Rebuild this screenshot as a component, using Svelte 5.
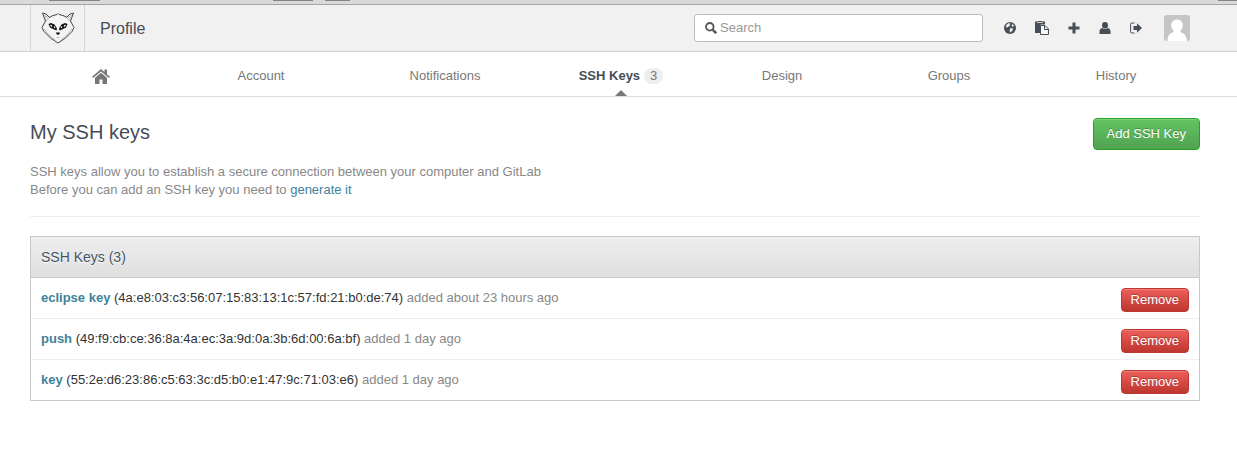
<script>
  const tabs = ['Account', 'Notifications', 'SSH Keys', 'Design', 'Groups', 'History'];
  const keys = [
    { title: 'eclipse key', print: '4a:e8:03:c3:56:07:15:83:13:1c:57:fd:21:b0:de:74', age: 'added about 23 hours ago' },
    { title: 'push', print: '49:f9:cb:ce:36:8a:4a:ec:3a:9d:0a:3b:6d:00:6a:bf', age: 'added 1 day ago' },
    { title: 'key', print: '55:2e:d6:23:86:c5:63:3c:d5:b0:e1:47:9c:71:03:e6', age: 'added 1 day ago' }
  ];
</script>

<div class="strip"><i class="a"></i><i class="b"></i><i class="c"></i><i class="d"></i></div>

<header>
  <a class="logo" href="#home" aria-label="Dashboard">
    <svg width="34" height="32" viewBox="0 0 34 32" fill="none" stroke="#444" stroke-width="1" stroke-linejoin="round">
      <path fill="#f5f5f5" d="M8 5.500 12 3.500 16 2.500 17 1.500 18 2.500 22 3.500 26 5.500 29.500 9 33 15.500 31 19.500 24.500 26 17 31 9.500 26 3 19.500 1 15.500 4.500 9Z" />
      <path fill="#eee" d="M4.500 9 1.500 1 5 2 8.500 5.500M29.500 9 32.500 1 29 2 25.500 5.500" />
      <path stroke="#aaa" stroke-width=".8" d="M4.500 7 3.500 3.500 7 5.500M29.500 7 30.500 3.500 27 5.500M3 17 8 23 14 28M31 17 26 23 20 28" />
      <g fill="#111" stroke="none">
        <path d="M7.500 12 10 11 13.500 12.500 16 16.500 15.500 18.500 12 17 9 15.500Z" />
        <path d="M26.500 12 24 11 20.500 12.500 18 16.500 18.500 18.500 22 17 25 15.500Z" />
        <path d="M15 20.500H19L18.500 22 17 23 15.500 22Z" />
      </g>
      <path stroke="#fff" stroke-width="1.200" d="M9.500 13 11 14.500M13 14.500 14 16M24.500 13 23 14.500M21 14.500 20 16" />
      <path stroke="#bbb" d="M15.500 25.500H18.500" />
    </svg>
  </a>
  <h1>Profile</h1>
  <label class="search">
    <svg width="12" height="12" viewBox="0 0 12 12" fill="none" stroke="#555"><circle cx="4.800" cy="4.800" r="3.800" stroke-width="1.800" /><path stroke-width="2.500" d="M7.800 7.800 11.200 11.200" /></svg>
    <input type="text" placeholder="Search" aria-label="Search" />
  </label>
  <nav class="icons" aria-label="Tools">
    <a href="#public" aria-label="Public area"><svg width="12" height="12" viewBox="0 0 12 12"><circle cx="6" cy="6" r="6" fill="#474d57" /><path fill="#f1f1f1" d="M2.200 3 4.500 1.300 6.500 1.500 5.500 3 6 4 4.500 4.500 3.500 5.500 2 5ZM6.500 6 9 6.500 8.500 8.500 6.500 10.500 5.500 9 6 7.500ZM8.500 2 10 3.500 9.500 4.500 8 4.500 7.500 3.500Z" /></svg></a>
    <a href="#snippets" aria-label="Snippets"><svg width="14" height="14" viewBox="0 0 14 14"><path fill="#474d57" d="M0 .5H2.500V0H7.500V.5H10V3.500H5.500V12H0Z" /><path fill="#f1f1f1" d="M2 1.200H8V2H2Z" /><path fill="#f8f8f8" stroke="#474d57" d="M5.500 4.500H10L13.500 8V13.500H5.500ZM9.500 4.500V8.500H13.500" /></svg></a>
    <a href="#new" aria-label="New project"><svg width="12" height="12" viewBox="0 0 12 12"><path fill="#474d57" d="M4.500 0.500H7.500V4.500H11.500V7.500H7.500V11.500H4.500V7.500H.5V4.500H4.500Z" /></svg></a>
    <a href="#profile" aria-label="Profile"><svg width="12" height="12" viewBox="0 0 12 12" fill="#474d57"><ellipse cx="6" cy="3.200" rx="3" ry="3.200" /><path d="M.5 12Q0 6.500 3.200 6Q6 8 8.800 6Q12 6.500 11.500 12Z" /></svg></a>
    <a href="#logout" aria-label="Logout"><svg width="12" height="12" viewBox="0 0 12 12"><path fill="none" stroke="#474d57" d="M4.500 1H2Q.6 1 .6 2.500V9.500Q.6 11 2 11H4.500" /><path fill="#474d57" d="M3.500 4H7V1.200L12 6 7 10.800V8H3.500Z" /></svg></a>
  </nav>
  <a class="avatar" href="#me" aria-label="Account">
    <svg width="26" height="26" viewBox="0 0 26 26"><rect width="26" height="26" rx="3" fill="#c5c5c5" /><path fill="#fff" d="M13 4.500C9 4.500 7 7.500 7.200 11 7.400 13 8.500 14.500 9.500 15.500V17L6.500 18.500C4 20 3.500 23 3.500 26H22.800C22.800 23 22 20 19.500 18.500L16.500 17V15.500C17.500 14.500 18.600 13 18.800 11 19 7.500 17 4.500 13 4.500Z" /></svg>
  </a>
</header>

<nav class="tabs" aria-label="Profile sections">
  <a href="#home" aria-label="Home"><svg width="18" height="15" viewBox="0 0 18 15" fill="#777"><path d="M9 0 12.500 3V.5H15V5.200L18 7.700 17 9 9 2.500 1 9 0 7.700Z" /><path d="M9 3.800 15 8.700V15H10.500V10.500H7.500V15H3V8.700Z" /></svg></a>
  {#each tabs as tab}
    <a href="#{tab}" class:active={tab === 'SSH Keys'}>{tab}{#if tab === 'SSH Keys'}<span class="count">3</span>{/if}</a>
  {/each}
</nav>

<main>
  <div class="title">
    <h2>My SSH keys</h2>
    <button class="add" type="button">Add SSH Key</button>
  </div>
  <p>SSH keys allow you to establish a secure connection between your computer and GitLab<br />Before you can add an SSH key you need to <a href="#generate">generate it</a></p>
  <hr />
  <section>
    <h3>SSH Keys (3)</h3>
    <ul>
      {#each keys as key}
        <li>
          <div><a href="#{key.title}">{key.title}</a> <span class="print">({key.print})</span> {key.age}</div>
          <button class="remove" type="button">Remove</button>
        </li>
      {/each}
    </ul>
  </section>
</main>

<style>
  :global(body) { margin: 0; background: #fff; }
  :global(#app) { font: 13px/18px "Liberation Sans", Arial, sans-serif; color: #888; }
  a { color: #408299; text-decoration: none; }
  svg { display: block; }
  h1, h2, h3, p, ul { margin: 0; padding: 0; font-weight: normal; }
  .strip { height: 4px; background: #d9d9d9; border-bottom: 1px solid #a5a5a5; display: flex; }
  .strip i { height: 1px; background: #858585; }
  .a { margin-left: 49px; width: 51px; }
  .b { margin-left: 173px; width: 40px; }
  .c { margin-left: 12px; width: 25px; }
  .d { margin-left: auto; width: 19px; }
  header { height: 46px; display: flex; align-items: center; padding: 0 47px 0 30px; background: #f1f1f1; border-bottom: 1px solid #d0d0d0; }
  .logo { box-sizing: border-box; width: 55px; height: 46px; display: grid; place-items: center; border: solid #d5d5d5; border-width: 0 1px; }
  h1 { flex: 1; padding: 2px 0 0 15px; color: #474d57; font-size: 16px; line-height: 20px; }
  .search { box-sizing: border-box; width: 289px; height: 28px; display: flex; align-items: center; gap: 3px; padding: 0 10px; background: #fff; border: 1px solid #bbb; border-radius: 3px; }
  input { flex: 1; min-width: 0; padding: 0; border: 0; outline: 0; font: inherit; background: none; color: #555; }
  input::placeholder { color: #999; opacity: 1; }
  .icons { display: flex; align-items: center; gap: 19px; margin: 0 22px 0 21px; }
  .tabs { height: 44px; display: grid; grid-template-columns: 142fr 178fr 190fr 162fr 160fr 174fr 160fr; padding: 0 41px 0 30px; border-bottom: 1px solid #ddd; }
  .tabs a { position: relative; display: flex; align-items: center; justify-content: center; padding-top: 4px; box-sizing: border-box; color: #777; }
  .tabs .active { color: #474d57; font-weight: bold; }
  .active::after { content: ""; position: absolute; bottom: 0; left: 50%; margin-left: -6px; border: 6px solid transparent; border-top: 0; border-bottom-color: #777; }
  .count { margin-left: 4px; padding: 0 6px; line-height: 16px; border-radius: 8px; background: #eee; color: #777; font-weight: normal; }
  main { padding: 21px 37px 0 30px; }
  .title { display: flex; justify-content: space-between; height: 45px; align-items: flex-start; }
  h2 { color: #474d57; font-size: 20px; line-height: 28px; }
  button { box-sizing: border-box; font: inherit; color: #fff; text-shadow: 0 -1px 0 rgba(0,0,0,.25); border-radius: 4px; cursor: pointer; }
  .add { height: 32px; padding: 0 13px; background: linear-gradient(#62c462, #51a351); border: 1px solid #22a522; box-shadow: inset 0 1px 0 rgba(255,255,255,.2); }
  .remove { height: 24px; padding: 0 9px; background: linear-gradient(#ee5f5b, #bd362f); border: 1px solid #bd362f; box-shadow: inset 0 1px 0 rgba(255,255,255,.2); }
  hr { margin: 17px 0 19px; border: 0; border-top: 1px solid #eee; }
  section { border: 1px solid #c8c8c8; }
  h3 { padding: 10px; height: 20px; font-size: 14px; line-height: 20px; color: #456; background: linear-gradient(#eee, #dfdfdf); border-bottom: 1px solid #c8c8c8; text-shadow: 0 1px 1px #fff; }
  ul { list-style: none; }
  li { display: flex; align-items: flex-start; justify-content: space-between; padding: 10px 10px 6px; border-bottom: 1px solid #eee; line-height: 20px; }
  li:last-child { border-bottom: 0; }
  li a { font-weight: bold; }
  .print { color: #333; }
</style>
